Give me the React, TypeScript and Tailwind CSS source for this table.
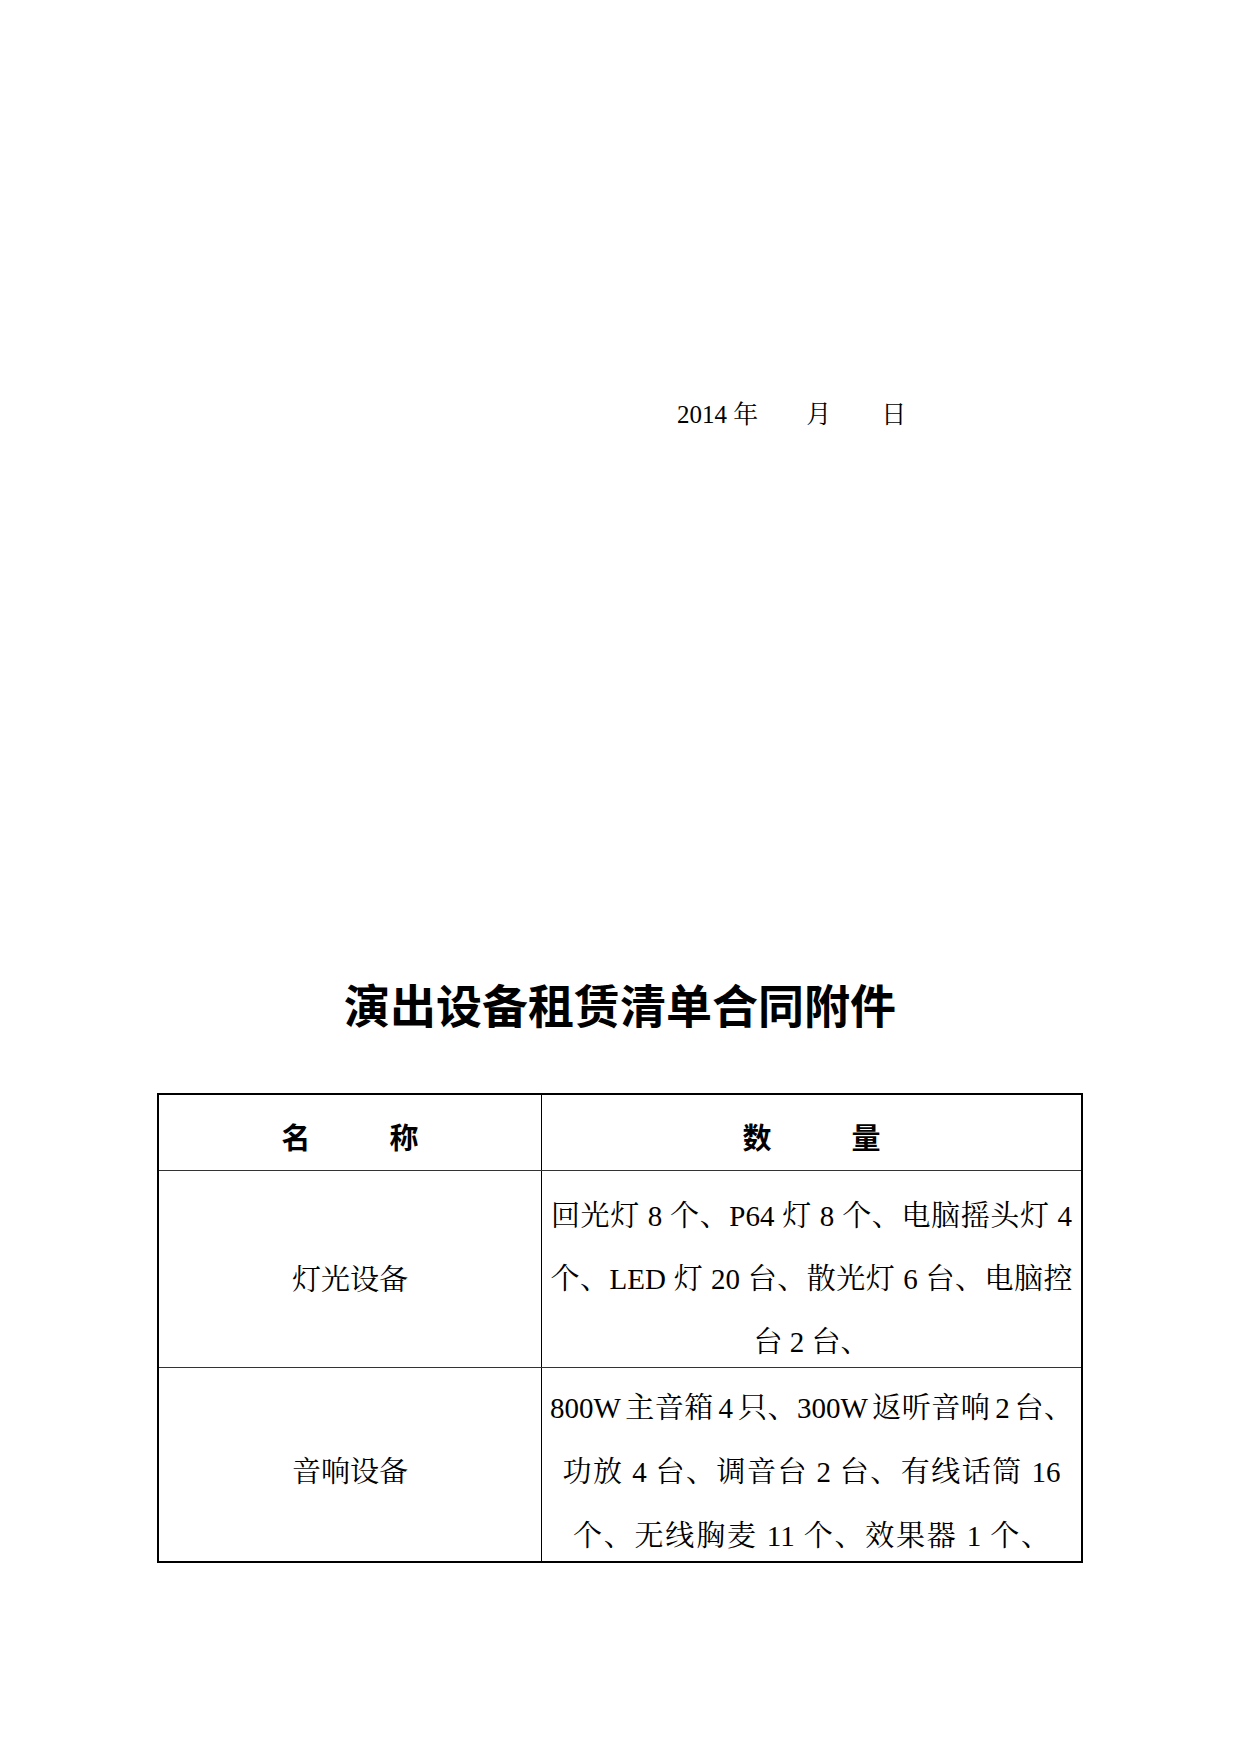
const body = {
  fontFamily: '"Liberation Serif", "Noto Serif CJK SC", "Noto Sans CJK SC", serif',
};
const heiti = {
  fontFamily: '"Noto Sans CJK SC", "Liberation Sans", sans-serif',
};

// one text line inside the quantity column; width given = justified full line
function Line({ w, children, lead }: { w?: string; children: React.ReactNode; lead: string }) {
  if (!w) {
    return <div className={`${lead} text-center whitespace-nowrap`}>{children}</div>;
  }
  return (
    <div className={`${lead} ${w} mx-auto whitespace-nowrap text-justify [text-align-last:justify]`}>
      {children}
    </div>
  );
}

export default function App() {
  return (
    <div className="w-[1240px] min-h-[1754px] bg-white text-black" style={body}>
      {/* date line */}
      <div className="pt-[397px] pl-[677px] text-[25px] leading-[36px] flex">
        <span>2014 年</span>
        <span className="ml-[48px]">月</span>
        <span className="ml-[50px]">日</span>
      </div>

      {/* title */}
      <h1 className="mt-[540px] text-center text-[46px] leading-[60px] font-bold" style={heiti}>
        演出设备租赁清单合同附件
      </h1>

      {/* table */}
      <div className="mt-[60px] mx-auto w-[926px] border-2 border-black text-[29px] flex flex-col">
        <div className="h-[76px] flex border-b border-[#333]">
          <div className="w-[383px] border-r border-black flex items-center justify-center gap-[79px] pt-[9px] font-bold" style={heiti}>
            <span>名</span>
            <span>称</span>
          </div>
          <div className="flex-1 flex items-center justify-center gap-[80px] pt-[9px] font-bold" style={heiti}>
            <span>数</span>
            <span>量</span>
          </div>
        </div>

        <div className="h-[197px] flex border-b border-[#333]">
          <div className="w-[383px] border-r border-black pt-[78px] leading-[63px] text-center">灯光设备</div>
          <div className="flex-1 pt-[14px]">
            <Line lead="leading-[63px]" w="w-[521px]">回光灯 8 个、P64 灯 8 个、电脑摇头灯 4</Line>
            <Line lead="leading-[63px]" w="w-[522px]">个、LED 灯 20 台、散光灯 6 台、电脑控</Line>
            <Line lead="leading-[63px]">台 2 台、</Line>
          </div>
        </div>

        <div className="h-[193px] flex">
          <div className="w-[383px] border-r border-black pt-[72px] leading-[64px] text-center">音响设备</div>
          <div className="flex-1 pt-[8px]">
            <Line lead="leading-[64px] [word-spacing:-3px]" w="w-[523px]">800W 主音箱 4 只、300W 返听音响 2 台、</Line>
            <Line lead="leading-[64px]" w="w-[498px]">功放 4 台、调音台 2 台、有线话筒 16</Line>
            <Line lead="leading-[64px]" w="w-[477px]">个、无线胸麦 11 个、效果器 1 个、</Line>
          </div>
        </div>
      </div>
    </div>
  );
}
